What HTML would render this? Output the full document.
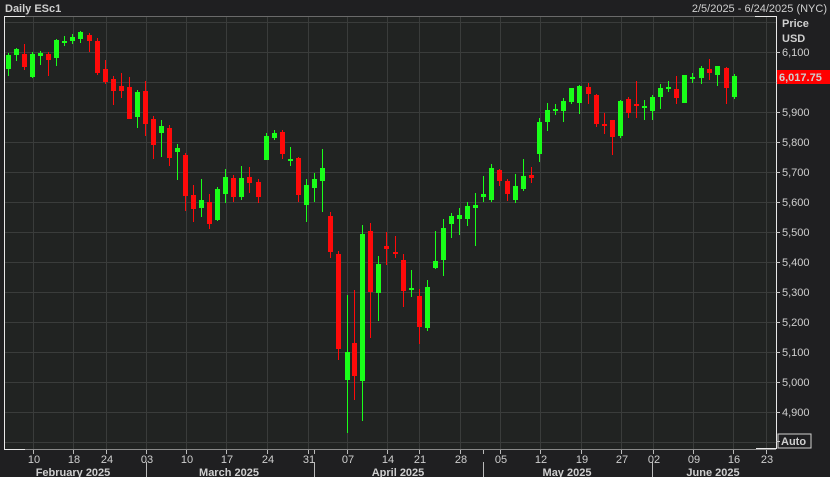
<!DOCTYPE html>
<html><head><meta charset="utf-8"><style>
html,body{margin:0;padding:0;background:#1f1f21;width:830px;height:477px;overflow:hidden}
svg{display:block}
text{font-family:"Liberation Sans",sans-serif;fill:#cfcfcf;font-size:11px}
</style></head><body>
<svg id="s" width="830" height="477" xmlns="http://www.w3.org/2000/svg">
<rect x="0" y="0" width="830" height="477" fill="#1f1f21"/>
<rect x="5" y="16" width="771" height="433" fill="#212322"/>
<g id="grid" stroke="#3a3c3b" stroke-width="1"></g>
<line x1="5" y1="16.5" x2="776" y2="16.5" stroke="#6a6a6a"/>
<line x1="5" y1="449.5" x2="776" y2="449.5" stroke="#8a8a8a"/>
<line x1="4.5" y1="16" x2="4.5" y2="449" stroke="#e8e8e8"/>
<line x1="4" y1="16.5" x2="25" y2="16.5" stroke="#e8e8e8"/>
<line x1="4" y1="449.5" x2="25" y2="449.5" stroke="#e8e8e8"/>
<line x1="776.5" y1="16" x2="776.5" y2="449" stroke="#e8e8e8"/>
<line x1="756" y1="448.5" x2="776" y2="448.5" stroke="#e8e8e8"/>
<line x1="755" y1="16.5" x2="776" y2="16.5" stroke="#e8e8e8"/>
<g id="c"></g>
<g id="ax"></g>
<text x="5" y="12" font-weight="bold" font-size="12">Daily ESc1</text>
<text x="827" y="12" text-anchor="end" font-size="11.5">2/5/2025 - 6/24/2025 (NYC)</text>
<text x="782" y="27" font-weight="bold" font-size="11" fill="#d8d8d8">Price</text>
<text x="782" y="42" font-weight="bold" font-size="11" fill="#d8d8d8">USD</text>
<rect x="778" y="434" width="33" height="14" fill="none" stroke="#d0d0d0"/>
<text x="781" y="445" font-weight="bold" font-size="11" fill="#e0e0e0">Auto</text>
<line x1="776" y1="441.5" x2="780" y2="441.5" stroke="#ccc"/>
<rect x="777" y="70" width="53" height="14" fill="#ff0000"/>
<text x="779" y="81" font-weight="bold" font-size="11" fill="#1a1a1a">6,017.75</text>
</svg>
<script>
var NS="http://www.w3.org/2000/svg",g=document.getElementById('grid'),c=document.getElementById('c'),ax=document.getElementById('ax');
function el(p,t,a,txt){var e=document.createElementNS(NS,t);for(var k in a)e.setAttribute(k,a[k]);if(txt)e.textContent=txt;p.appendChild(e);return e;}
var xs=[33,73,106,146,186,226,267,308,347,387,419,460,500,540,581,621,653,693,733,766];
var lbl=["10","18","24","03","10","17","24","31","07","14","21","28","05","12","19","27","02","09","16","23"];
xs.forEach(function(x,i){if(x<776)el(g,'line',{x1:x+.5,y1:17,x2:x+.5,y2:449});
el(ax,'line',{x1:x+.5,y1:450,x2:x+.5,y2:454,stroke:'#bbb'});
el(ax,'text',{x:x+1,y:463,'text-anchor':'middle','font-size':'11.5'},lbl[i]);});
[314,483].forEach(function(x){el(ax,'line',{x1:x+.5,y1:450,x2:x+.5,y2:454,stroke:'#bbb'});});
for(var y=22;y<449;y+=30)el(g,'line',{x1:5,y1:y+.5,x2:776,y2:y+.5});
var pl=["6,100","6,000","5,900","5,800","5,700","5,600","5,500","5,400","5,300","5,200","5,100","5,000","4,900"];
pl.forEach(function(t,i){var y=52+i*30;el(ax,'line',{x1:776,y1:y+.5,x2:780,y2:y+.5,stroke:'#ccc'});
if(i!=1)el(ax,'text',{x:782,y:y+4,'font-size':'11'},t);});
[146,314,483,652].forEach(function(x){el(ax,'line',{x1:x+.5,y1:462,x2:x+.5,y2:477,stroke:'#bbb'});});
[["February 2025",73],["March 2025",229],["April 2025",398],["May 2025",567],["June 2025",713]].forEach(function(m){
el(ax,'text',{x:m[1],y:476,'text-anchor':'middle','font-weight':'bold','font-size':'12','fill':'#d8d8d8'},m[0]);});
var d=[
[8,53,76,55,69,'g'],[16,48,61,49,55,'g'],[24,44,70,54,67,'r'],[32,52,78,54,77,'g'],[40,51,65,53,56,'g'],[48,52,76,54,60,'r'],
[56,39,66,40,58,'g'],[64,36,46,41,42,'g'],[72,34,44,37,41,'g'],[80,31,43,32,39,'g'],[89,33,52,35,41,'r'],[97,38,75,41,73,'r'],
[105,60,84,69,82,'r'],[113,76,105,79,91,'r'],[121,73,98,86,91,'r'],[129,77,119,87,119,'r'],[137,90,128,92,117,'g'],[145,81,136,91,124,'r'],
[153,116,159,119,145,'r'],[161,120,157,126,133,'g'],[169,125,166,128,158,'r'],[177,144,180,148,152,'g'],[185,153,211,155,196,'r'],
[193,185,222,195,209,'r'],[201,179,217,200,208,'g'],[209,194,229,202,224,'r'],[217,187,221,189,220,'g'],[225,169,203,177,194,'g'],
[233,175,202,178,197,'r'],[241,166,200,178,197,'g'],[249,167,193,177,183,'r'],[258,179,203,182,197,'r'],[266,133,160,136,160,'g'],
[274,130,140,133,138,'g'],[282,130,159,132,154,'r'],[290,147,166,159,161,'g'],[298,157,202,158,195,'r'],[306,179,222,185,205,'g'],
[314,173,202,179,188,'g'],[322,149,212,168,181,'g'],[330,212,258,216,252,'r'],[338,251,360,254,349,'r'],[347,295,433,352,380,'g'],
[354,290,400,343,376,'r'],[362,225,421,234,381,'g'],[370,223,338,231,292,'r'],[378,256,321,264,293,'g'],[386,232,265,246,249,'r'],
[395,236,258,252,254,'r'],[403,254,307,260,291,'r'],[411,270,297,288,290,'g'],[419,289,344,296,327,'r'],[427,280,331,287,328,'g'],
[435,231,269,261,268,'g'],[443,219,276,228,260,'g'],[451,213,238,216,224,'g'],[459,208,235,215,219,'g'],[467,202,226,206,219,'g'],
[475,193,246,205,208,'g'],[483,176,202,194,197,'g'],[491,164,202,168,200,'g'],[499,169,186,170,181,'r'],[507,179,201,181,194,'r'],
[515,174,203,186,200,'g'],[523,159,191,176,189,'g'],[531,167,183,175,178,'r'],[539,118,162,122,154,'g'],[547,103,131,110,122,'g'],
[555,104,115,109,111,'g'],[563,98,122,101,111,'g'],[571,88,104,88,102,'g'],[579,85,114,86,103,'g'],[588,83,104,87,94,'r'],
[596,94,127,95,124,'r'],[604,113,134,124,125,'r'],[612,120,155,120,137,'r'],[620,100,138,101,136,'g'],[628,97,118,99,113,'r'],
[636,81,118,104,105,'r'],[644,100,120,106,108,'g'],[652,95,120,97,111,'g'],[660,84,109,88,97,'g'],[668,81,92,87,88,'g'],
[676,76,104,89,98,'r'],[684,75,103,75,103,'g'],[692,73,83,77,78,'g'],[701,66,84,68,78,'g'],[709,59,80,69,73,'r'],
[717,66,86,66,75,'g'],[726,67,104,68,88,'r'],[734,74,99,76,97,'g']];
d.forEach(function(k){var col=k[5]=='g'?'#19ff19':'#ff0a0a';
el(c,'rect',{x:k[0],y:k[1],width:1,height:k[2]-k[1],fill:col});
var h=Math.max(2,k[4]-k[3]);el(c,'rect',{x:k[0]-2,y:k[3],width:5,height:h,fill:col});});
</script>
</body></html>
